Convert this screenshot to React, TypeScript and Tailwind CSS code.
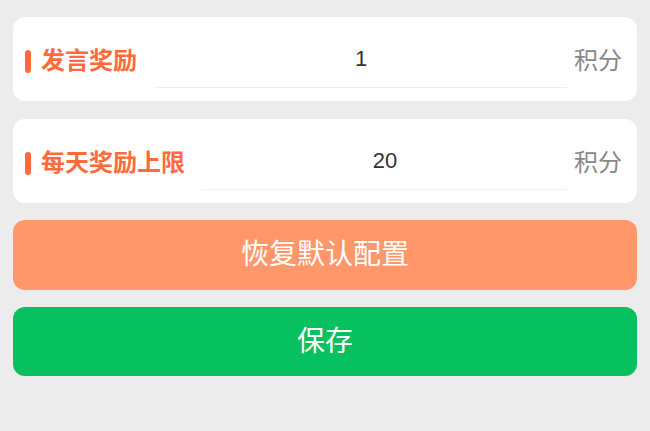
import React from 'react';

const cjk = "font-['Liberation_Sans','Noto_Sans_CJK_SC',sans-serif]";

function Row({ label, value }: { label: string; value: string }) {
  return (
    <div className="flex items-center h-[84px] bg-white rounded-[12px] pl-3 pr-[15px]">
      <span className="mt-1 w-[6px] h-[23px] rounded-full bg-[#ff6a3c]" />
      <span className="ml-[10px] pt-1 text-[24px] leading-none font-bold text-[#ff6a3c] whitespace-nowrap">
        {label}
      </span>
      <input
        type="text"
        defaultValue={value}
        className="ml-[18px] flex-1 min-w-0 h-[58px] border-b border-[#eeeeee] text-center text-[22px] text-[#333333] outline-none bg-transparent"
      />
      <span className="ml-[7px] pt-1 text-[24px] leading-none text-[#888888] whitespace-nowrap">积分</span>
    </div>
  );
}

export default function App() {
  return (
    <div className={`min-h-[431px] bg-[#ececec] px-[13px] pt-[17px] ${cjk}`}>
      <div className="flex flex-col gap-[18px]">
        <Row label="发言奖励" value="1" />
        <Row label="每天奖励上限" value="20" />
      </div>
      <button className="mt-[17px] w-full h-[70px] rounded-[12px] bg-[#ff976a] text-white text-[28px] flex items-center justify-center">
        恢复默认配置
      </button>
      <button className="mt-[17px] w-full h-[69px] rounded-[12px] bg-[#07c160] text-white text-[28px] flex items-center justify-center">
        保存
      </button>
    </div>
  );
}
